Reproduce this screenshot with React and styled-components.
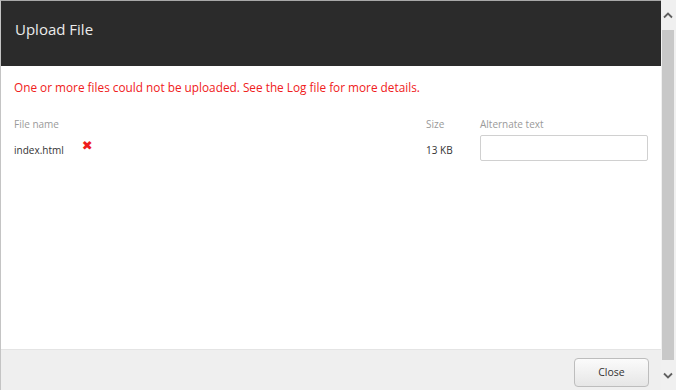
import React from 'react';
import styled, { createGlobalStyle } from 'styled-components';

const GlobalStyle = createGlobalStyle`
    html, body {
        margin: 0;
        padding: 0;
        overflow: hidden;
        background: #fff;
    }
`;

const Screen = styled.div`
    display: flex;
    width: 676px;
    height: 390px;
    font-family: "Open Sans", "Liberation Sans", sans-serif;
`;

const Dialog = styled.div`
    display: flex;
    flex-direction: column;
    width: 660px;
    border-left: 1px solid #c4c4c4;
    border-top: 1px solid #a8a8a8;
`;

const Header = styled.header`
    height: 65px;
    box-sizing: border-box;
    padding: 16px 14px;
    background: #2b2b2b;
    color: #ececec;
    font-size: 15px;
    line-height: 24px;
`;

const Content = styled.div`
    flex: 1;
    padding: 13px 13px;
    background: #fff;
`;

const ErrorText = styled.div`
    color: #f02020;
    font-size: 11.8px;
    line-height: 16px;
`;

const Table = styled.div`
    display: grid;
    grid-template-columns: 412px 54px 168px;
    margin-top: 22px;
    row-gap: 4px;
    align-items: center;
`;

const HeadCell = styled.div`
    color: #9a9a9a;
    font-size: 10px;
    line-height: 14px;
`;

const Cell = styled.div`
    display: flex;
    align-items: center;
    gap: 18px;
    color: #333;
    font-size: 10px;
    line-height: 14px;
    padding-top: 3px;
`;

const RemoveMark = styled.span`
    color: #ee1c1c;
    font-size: 13px;
    font-weight: bold;
    line-height: 1;
    margin-top: -8px;
    font-family: "DejaVu Sans", sans-serif;
`;

const TextInput = styled.input`
    box-sizing: border-box;
    width: 168px;
    height: 26px;
    margin-top: -3px;
    border: 1px solid #d0d0d0;
    border-radius: 2px;
    outline: none;
`;

const Footer = styled.footer`
    height: 41px;
    box-sizing: border-box;
    display: flex;
    justify-content: flex-end;
    align-items: center;
    padding: 0 12px 0 0;
    background: #efefef;
    border-top: 1px solid #e4e4e4;
`;

const Button = styled.button`
    width: 75px;
    height: 29px;
    margin-top: 4px;
    border: 1px solid #bdbdbd;
    border-radius: 4px;
    background: linear-gradient(#fbfbfb, #e6e6e6);
    color: #333;
    font-family: inherit;
    font-size: 10.5px;
`;

const Scrollbar = styled.div`
    display: flex;
    flex-direction: column;
    width: 15px;
    background: #f0f0f0;
`;

const Arrow = styled.div`
    height: 30px;
    display: flex;
    align-items: center;
    justify-content: center;
    padding-right: 2px;
`;

const Thumb = styled.div`
    flex: 1;
    width: 12px;
    margin-left: 1px;
    background: #c8c8c8;
`;

function Chevron({ down }) {
    return (
        <svg width="10" height="7" viewBox="0 0 10 7">
            <path
                d={down ? 'M1 1.5 L5 5.5 L9 1.5' : 'M1 5.5 L5 1.5 L9 5.5'}
                fill="none"
                stroke="#606060"
                strokeWidth="1.8"
            />
        </svg>
    );
}

function App() {
    return (
        <Screen>
            <GlobalStyle />
            <Dialog>
                <Header>Upload File</Header>
                <Content>
                    <ErrorText>
                        One or more files could not be uploaded. See the Log file for more details.
                    </ErrorText>
                    <Table>
                        <HeadCell>File name</HeadCell>
                        <HeadCell>Size</HeadCell>
                        <HeadCell>Alternate text</HeadCell>
                        <Cell>
                            index.html
                            <RemoveMark>✖</RemoveMark>
                        </Cell>
                        <Cell>13 KB</Cell>
                        <Cell>
                            <TextInput type="text" />
                        </Cell>
                    </Table>
                </Content>
                <Footer>
                    <Button>Close</Button>
                </Footer>
            </Dialog>
            <Scrollbar>
                <Arrow>
                    <Chevron />
                </Arrow>
                <Thumb />
                <Arrow>
                    <Chevron down />
                </Arrow>
            </Scrollbar>
        </Screen>
    );
}

export default App;
